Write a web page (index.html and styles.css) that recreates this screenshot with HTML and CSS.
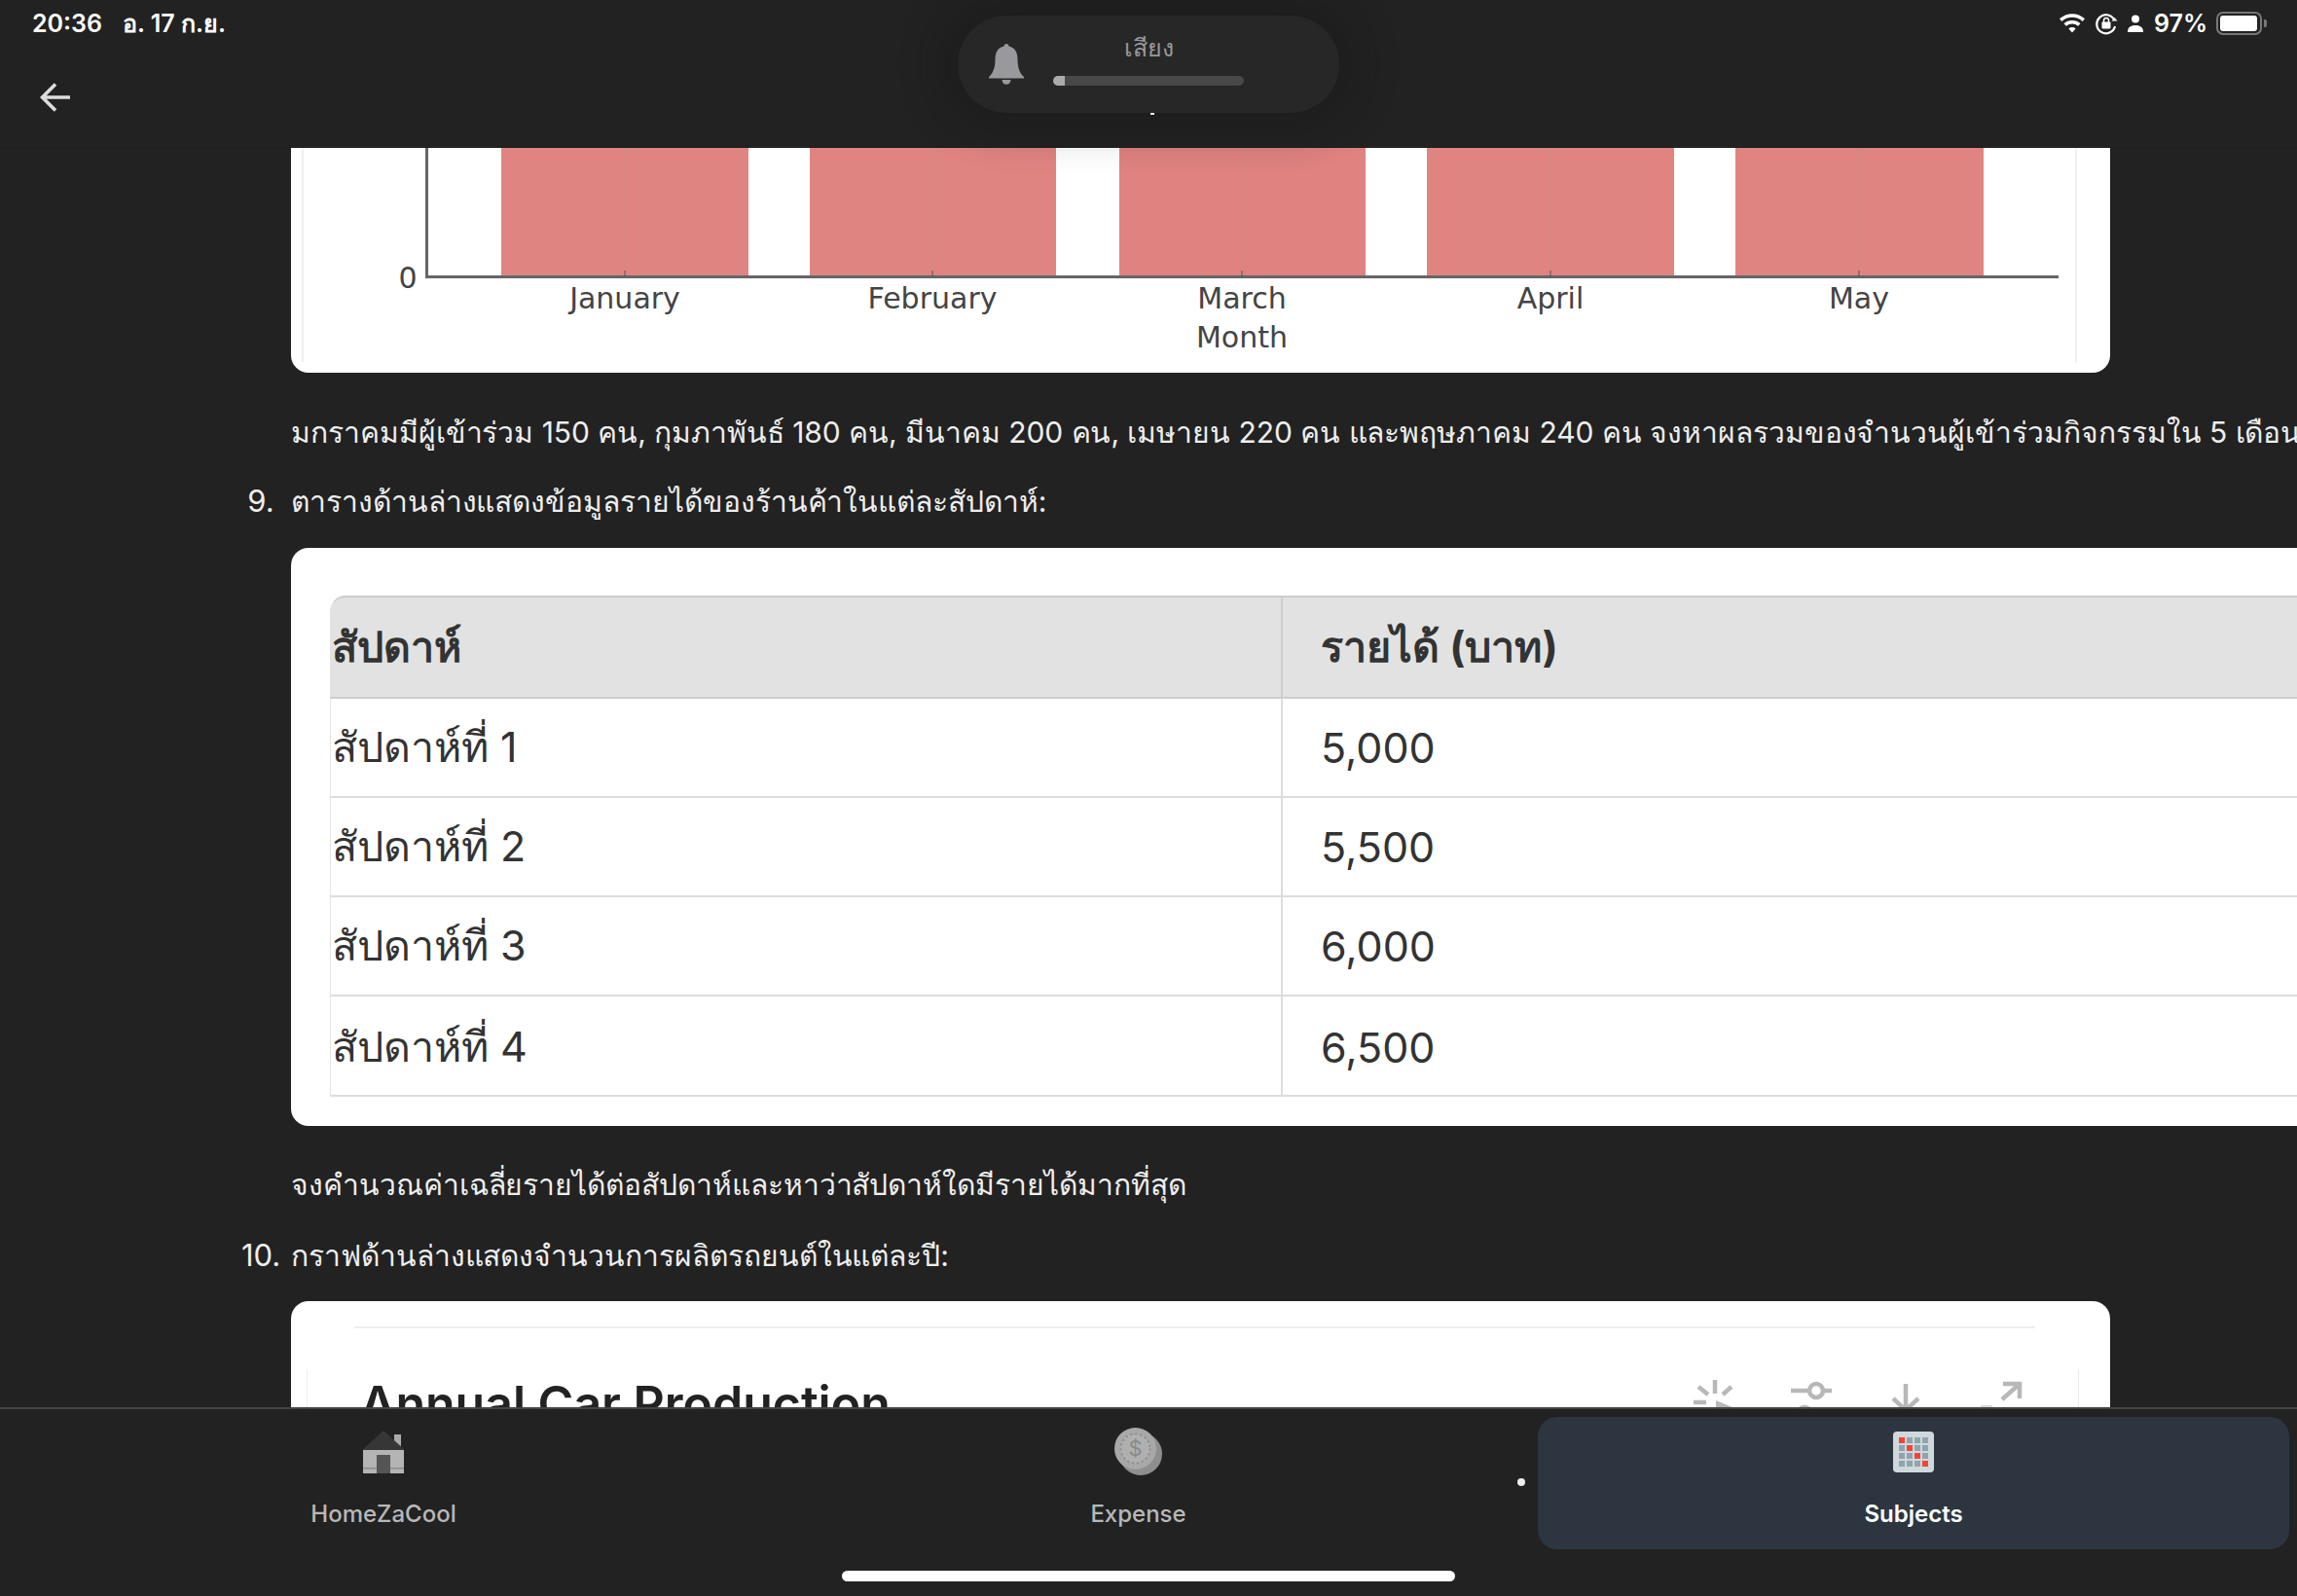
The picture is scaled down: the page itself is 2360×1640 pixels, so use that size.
FILE: index.html
```html
<!DOCTYPE html>
<html lang="th">
<head>
<meta charset="utf-8">
<title>Subjects</title>
<link rel="stylesheet" href="styles.css">
</head>
<body>
<div class="app">
  <header class="topbar">
    <div class="status">
      <div class="status-left"><span class="time">20:36</span><span class="date">อ. 17 ก.ย.</span></div>
      <div class="status-right">
        <svg class="ic-wifi" viewBox="0 0 28 20"><path d="M14 19.500l-3.600-4a5.200 5.200 0 0 1 7.200 0zM7.900 12.800l-2.400-2.600a12.600 12.600 0 0 1 17 0l-2.400 2.600a9 9 0 0 0-12.200 0zM3.400 7.900L1 5.300a19 19 0 0 1 26 0l-2.400 2.600a15.500 15.500 0 0 0-21.200 0z" fill="#fff"/></svg>
        <svg class="ic-lock" viewBox="0 0 24 24"><path d="M20.500 9A9.500 9.500 0 1 0 21 15" fill="none" stroke="#fff" stroke-width="2.200"/><path d="M17.500 9.500h6l-3-3.500z" fill="#fff"/><rect x="7.500" y="10.500" width="9" height="7" rx="1" fill="#fff"/><path d="M9.500 11V9a2.500 2.500 0 0 1 5 0v2" fill="none" stroke="#fff" stroke-width="1.500"/></svg>
        <svg class="ic-person" viewBox="0 0 16 18"><circle cx="8" cy="4.500" r="4" fill="#fff"/><path d="M0 18c0-5 3-7 8-7s8 2 8 7z" fill="#fff"/></svg>
        <span class="battery-text">97%</span>
        <div class="battery"><div class="battery-fill"></div></div>
        <div class="battery-nub"></div>
      </div>
    </div>
    <div class="navrow">
      <svg class="ic-back" viewBox="0 0 32 30"><path d="M31 15H3M16 1.500L2.500 15 16 28.500" fill="none" stroke="#ddd" stroke-width="3.600"/></svg>
    </div>
  </header>

  <main class="content">
    <figure class="card chart-top">
      <svg class="chart-svg" viewBox="0 0 1869 231">
        <g stroke="#f1f1f1" stroke-width="2"><line x1="12" y1="0" x2="12" y2="220"/><line x1="1834" y1="0" x2="1834" y2="220"/></g>
        <rect x="216" y="0" width="254" height="132" fill="#e08482"/>
        <rect x="533" y="0" width="253" height="132" fill="#e08482"/>
        <rect x="851" y="0" width="253" height="132" fill="#df8280"/>
        <rect x="1167" y="0" width="254" height="132" fill="#e08482"/>
        <rect x="1484" y="0" width="255" height="132" fill="#e08482"/>
        <g stroke="#cf8a82" stroke-width="1">
          <line x1="343" y1="0" x2="343" y2="132"/><line x1="659" y1="0" x2="659" y2="132"/><line x1="977" y1="0" x2="977" y2="132"/><line x1="1294" y1="0" x2="1294" y2="132"/><line x1="1611" y1="0" x2="1611" y2="132"/>
        </g>
        <path d="M139.500 0V132.500H1816" fill="none" stroke="#666" stroke-width="3"/>
        <g stroke="#555" stroke-width="1"><line x1="343" y1="126" x2="343" y2="132"/><line x1="659" y1="126" x2="659" y2="132"/><line x1="977" y1="126" x2="977" y2="132"/><line x1="1294" y1="126" x2="1294" y2="132"/><line x1="1611" y1="126" x2="1611" y2="132"/></g>
        <g class="chart-label">
          <text x="120" y="144" text-anchor="middle">0</text>
          <text x="343" y="165" text-anchor="middle">January</text>
          <text x="659" y="165" text-anchor="middle">February</text>
          <text x="977" y="165" text-anchor="middle">March</text>
          <text x="1294" y="165" text-anchor="middle">April</text>
          <text x="1611" y="165" text-anchor="middle">May</text>
          <text x="977" y="205" text-anchor="middle">Month</text>
        </g>
      </svg>
    </figure>

    <p class="para para-first">มกราคมมีผู้เข้าร่วม 150 คน, กุมภาพันธ์ 180 คน, มีนาคม 200 คน, เมษายน 220 คน และพฤษภาคม 240 คน จงหาผลรวมของจำนวนผู้เข้าร่วมกิจกรรมใน 5 เดือน</p>

    <div class="li li-9"><span class="num">9.</span><span class="li-text">ตารางด้านล่างแสดงข้อมูลรายได้ของร้านค้าในแต่ละสัปดาห์:</span></div>

    <div class="card table-card">
      <table class="income">
        <thead><tr><th class="c1">สัปดาห์</th><th class="c2">รายได้ (บาท)</th></tr></thead>
        <tbody>
          <tr><td class="c1">สัปดาห์ที่ 1</td><td class="c2">5,000</td></tr>
          <tr><td class="c1">สัปดาห์ที่ 2</td><td class="c2">5,500</td></tr>
          <tr><td class="c1">สัปดาห์ที่ 3</td><td class="c2">6,000</td></tr>
          <tr class="row-last"><td class="c1">สัปดาห์ที่ 4</td><td class="c2">6,500</td></tr>
        </tbody>
      </table>
    </div>

    <p class="para para-second">จงคำนวณค่าเฉลี่ยรายได้ต่อสัปดาห์และหาว่าสัปดาห์ใดมีรายได้มากที่สุด</p>

    <div class="li li-10"><span class="num">10.</span><span class="li-text">กราฟด้านล่างแสดงจำนวนการผลิตรถยนต์ในแต่ละปี:</span></div>

    <figure class="card chart-bottom">
      <div class="cb-rule"></div>
      <div class="cb-head">
        <span class="cb-title">Annual Car Production</span>
        <svg class="cb-tools" viewBox="0 0 360 60">
          <g stroke="#b8b8b8" stroke-width="4.500" fill="none">
            <path d="M27 5v14M10 12l10 8M44 12l-9 8M5 28h13"/>
            <path d="M105 16h18M139 16h8"/><circle cx="131" cy="16" r="7"/><circle cx="119" cy="40" r="7"/>
            <path d="M223 9v31M210 24l13 12 13-12"/>
            <path d="M323 9h17v15M340 9l-18 16"/>
          </g>
          <path d="M28 26l24 10-24 14z" fill="#b8b8b8"/>
          <path d="M300 33h12" stroke="#d8d8d8" stroke-width="4"/>
        </svg>
      </div>
    </figure>
  </main>

  <nav class="tabbar">
    <div class="tab tab-home">
      <svg class="tab-ic" viewBox="0 0 44 44"><rect x="33" y="4" width="7" height="12" fill="#aaa"/><path d="M22 0L44 20H0z" fill="#363636"/><rect x="1" y="20" width="42" height="24" fill="#b4b4b4"/><rect x="1" y="38" width="42" height="1.500" fill="#8c8c8c"/><rect x="15" y="25" width="14" height="19" fill="#555"/></svg>
      <span class="tab-label">HomeZaCool</span>
    </div>
    <div class="tab tab-expense">
      <svg class="tab-ic coin" viewBox="0 0 50 50"><circle cx="27" cy="27" r="22" fill="#8e8e8e"/><circle cx="21.500" cy="21.500" r="21.500" fill="#a8a8a8"/><circle cx="21.500" cy="21.500" r="15" fill="#b0b0b0" stroke="#8e8e8e" stroke-width="2" stroke-dasharray="2 3"/><text class="coin-s" x="21.500" y="29" text-anchor="middle">$</text></svg>
      <span class="tab-label">Expense</span>
    </div>
    <div class="tab-dot-cell"><span class="tab-dot"></span></div>
    <div class="tab tab-active">
      <svg class="tab-ic" viewBox="0 0 42 42"><rect width="42" height="42" rx="4" fill="#cfd8dc"/><g fill="#90a4ae"><rect x="14" y="6" width="6" height="6"/><rect x="22" y="6" width="6" height="6"/><rect x="30" y="6" width="6" height="6"/><rect x="6" y="14" width="6" height="6"/><rect x="22" y="14" width="6" height="6"/><rect x="30" y="14" width="6" height="6"/><rect x="6" y="22" width="6" height="6"/><rect x="14" y="22" width="6" height="6"/><rect x="30" y="22" width="6" height="6"/><rect x="6" y="30" width="6" height="6"/><rect x="14" y="30" width="6" height="6"/><rect x="22" y="30" width="6" height="6"/></g><g fill="#f44336"><rect x="6" y="6" width="6" height="6"/><rect x="14" y="14" width="6" height="6"/><rect x="22" y="22" width="6" height="6"/><rect x="30" y="30" width="6" height="6"/></g></svg>
      <span class="tab-label tab-label-active">Subjects</span>
    </div>
    <div class="home-indicator"></div>
  </nav>

  <div class="hud">
    <svg class="hud-bell" viewBox="0 0 36 42"><path d="M18 0c1.500 0 2.500 1 2.500 2.500C27 4 29.500 9 29.500 16c0 8 2 14 6.500 18v1.500H0V34c4.500-4 6.500-10 6.500-18 0-7 2.500-12 9-13.500C15.500 1 16.500 0 18 0z" fill="#98989d"/><path d="M13.500 37h9a4.500 4.800 0 0 1-9 0z" fill="#98989d"/></svg>
    <div class="hud-main">
      <span class="hud-title">เสียง</span>
      <div class="hud-track"><div class="hud-fill"></div></div>
    </div>
    <span class="hud-sliver"></span>
  </div>
</div>
</body>
</html>
```
FILE: styles.css
```css
* { box-sizing: border-box; }
html, body { margin: 0; padding: 0; }
body { background: #222; font-family: Inter, "Noto Sans", Roboto, sans-serif; }
.app { position: relative; width: 2360px; height: 1640px; overflow: hidden; display: flex; flex-direction: column; background: #222; }

.topbar { height: 152px; flex: none; background: #222; border-bottom: 1px solid #1f1f1f; position: relative; z-index: 2; }
.status { height: 48px; display: flex; justify-content: space-between; align-items: center; padding: 0 33px; color: #fff; }
.status-left { display: flex; align-items: baseline; gap: 21px; font-size: 25px; font-weight: 600; }
.status-right { display: flex; align-items: center; }
.ic-wifi { width: 28px; height: 20px; margin-right: 9px; }
.ic-lock { width: 24px; height: 24px; margin-right: 10px; }
.ic-person { width: 16px; height: 18px; margin-right: 11px; }
.battery-text { font-size: 25px; font-weight: 600; width: 64px; }
.battery { width: 47px; height: 24px; border: 2px solid #777; border-radius: 7px; padding: 2px; }
.battery-fill { width: 38px; height: 16px; background: #fff; border-radius: 3px; }
.battery-nub { width: 3px; height: 8px; background: #777; border-radius: 0 2px 2px 0; margin-left: 2px; margin-right: -2px; }
.navrow { height: 103px; padding: 37px 0 0 41px; }
.ic-back { width: 32px; height: 30px; display: block; }

.content { flex: 1; min-height: 0; overflow: hidden; padding-left: 299px; }
.card { background: #fff; margin: 0; }
.chart-top { width: 1869px; height: 231px; border-radius: 0 0 18px 18px; }
.chart-svg { display: block; width: 1869px; height: 231px; }
.chart-label text { font-family: "DejaVu Sans", sans-serif; font-size: 30px; fill: #444; }

.para, .li { margin: 0; white-space: nowrap; color: #eee; font-size: 30px; line-height: 44px; letter-spacing: -0.05px; }
.para-first { margin-top: 39px; }
.li { display: flex; position: relative; }
.li-9 { margin-top: 27px; }
.num { position: absolute; left: -54px; width: 46px; text-align: center; font-size: 31px; }

.table-card { width: 2100px; height: 594px; margin-top: 26px; border-radius: 18px; padding: 49px 0 0 40px; }
.income { border-collapse: separate; border-spacing: 0; width: 2060px; table-layout: fixed; color: #333; font-size: 43px; }
.income th, .income td { text-align: left; padding: 0; height: 102px; border-bottom: 2px solid #ddd; font-weight: 400; }
.income th { height: 106px; background: #e2e2e2; border-top: 2px solid #ccc; border-bottom-color: #ccc; font-weight: 700; }
.income .row-last td { height: 103px; padding-top: 2px; }
.income .c1 { width: 979px; padding-left: 1px; border-left: 1px solid #e4e4e4; border-right: 2px solid #ddd; }
.income .c2 { padding-left: 39px; }
.income thead .c1 { border-radius: 16px 0 0 0; border-right-color: #ccc; }

.para-second { margin-top: 38px; }
.li-10 { margin-top: 29px; }

.chart-bottom { position: relative; width: 1869px; height: 300px; margin-top: 25px; border-radius: 18px; padding: 26px 77px 0 65px; }
.chart-bottom::before { content: ""; position: absolute; left: 16px; right: 32px; top: 70px; bottom: 0; border-left: 1px solid #eee; border-right: 1px solid #e8e8e8; }
.cb-rule { height: 2px; background: #eee; }
.cb-head { position: relative; display: flex; justify-content: space-between; padding: 48px 0 0 6px; }
.cb-title { font-size: 50px; font-weight: 600; color: #222; line-height: 58px; }
.cb-tools { display: block; width: 360px; height: 60px; margin-right: -4px; }

.tabbar { height: 194px; flex: none; background: #222; border-top: 2px solid #444; position: relative; display: grid; grid-template-columns: 788px 763px 29px 772px; align-items: start; padding-top: 8px; }
.tab { display: flex; flex-direction: column; align-items: center; height: 136px; padding-top: 14px; }
.tab-ic { width: 44px; height: 44px; display: block; }
.coin { width: 50px; height: 50px; margin-top: -3px; margin-bottom: -3px; }
.coin-s { font-size: 22px; fill: #8a8a8a; }
.tab-label { margin-top: 27px; font-size: 24px; font-weight: 500; color: #b8b8b8; line-height: 30px; }
.tab-active { background: #2d3640; border-radius: 20px; padding-top: 15px; }
.tab-active .tab-ic { width: 42px; height: 42px; margin-bottom: 1px; }
.tab-label-active { color: #fff; font-weight: 600; }
.tab-dot-cell { display: flex; height: 136px; align-items: center; padding-left: 8px; }
.tab-dot { width: 8px; height: 8px; border-radius: 50%; background: #eee; margin-top: -2px; }
.home-indicator { position: absolute; left: 865px; top: 166px; width: 630px; height: 11px; border-radius: 6px; background: #fff; }

.hud { position: absolute; left: 984px; top: 16px; width: 392px; height: 100px; border-radius: 50px; background: #272727; box-shadow: 0 0 40px 20px rgba(20,20,20,.3); display: flex; align-items: flex-start; z-index: 3; }
.hud-bell { width: 36px; height: 42px; margin: 29px 0 0 32px; flex: none; }
.hud-main { width: 196px; margin-left: 30px; display: flex; flex-direction: column; align-items: center; }
.hud-title { font-size: 25px; font-weight: 500; color: #98989d; line-height: 32px; margin-top: 17px; }
.hud-track { width: 196px; height: 10px; margin-top: 13px; background: #484848; border-radius: 5px; overflow: hidden; }
.hud-fill { width: 12px; height: 10px; background: #aaa; }
.hud-sliver { position: absolute; left: 198px; top: 100px; width: 4px; height: 2px; background: #eee; }
```
